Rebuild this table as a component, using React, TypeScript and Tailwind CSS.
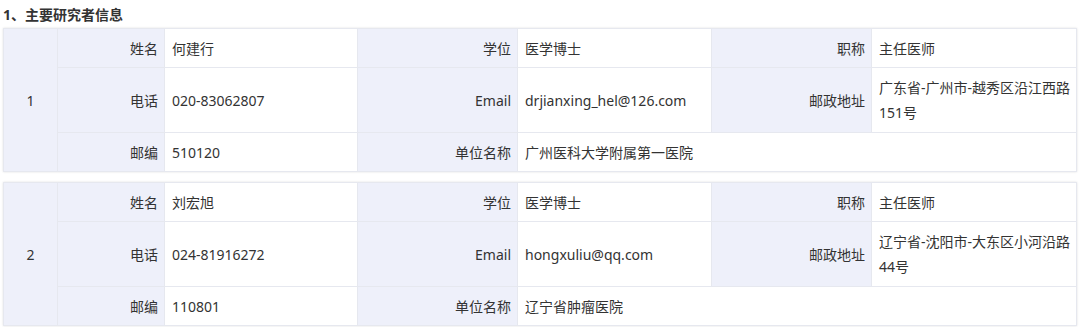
import React from "react";

type Person = {
  idx: string;
  name: string;
  degree: string;
  title: string;
  phone: string;
  email: string;
  address: string;
  zip: string;
  unit: string;
};

const people: Person[] = [
  {
    idx: "1",
    name: "何建行",
    degree: "医学博士",
    title: "主任医师",
    phone: "020-83062807",
    email: "drjianxing_hel@126.com",
    address: "广东省-广州市-越秀区沿江西路151号",
    zip: "510120",
    unit: "广州医科大学附属第一医院",
  },
  {
    idx: "2",
    name: "刘宏旭",
    degree: "医学博士",
    title: "主任医师",
    phone: "024-81916272",
    email: "hongxuliu@qq.com",
    address: "辽宁省-沈阳市-大东区小河沿路44号",
    zip: "110801",
    unit: "辽宁省肿瘤医院",
  },
];

const lab = "bg-[#eef0fa] text-right align-middle px-[6px] py-0 border border-[#e6e8ef]";
const val = "bg-white text-left align-middle pl-[7px] pr-[2px] py-0 border border-[#e6e8ef]";

function PersonTable({ p }: { p: Person }) {
  return (
    <table className="w-[1073px] table-fixed border-collapse shadow-[0_0_2px_rgba(0,0,0,0.12)]">
      <colgroup>
        <col className="w-[54px]" />
        <col className="w-[107px]" />
        <col className="w-[193px]" />
        <col className="w-[160px]" />
        <col className="w-[194px]" />
        <col className="w-[160px]" />
        <col className="w-[205px]" />
      </colgroup>
      <tbody>
        <tr className="h-[39px]">
          <td rowSpan={3} className="bg-[#eef0fa] text-center align-middle border border-[#e6e8ef]">
            {p.idx}
          </td>
          <td className={lab}>姓名</td>
          <td className={val}>{p.name}</td>
          <td className={lab}>学位</td>
          <td className={val}>{p.degree}</td>
          <td className={lab}>职称</td>
          <td className={val}>{p.title}</td>
        </tr>
        <tr className="h-[65px]">
          <td className={lab}>电话</td>
          <td className={val}>{p.phone}</td>
          <td className={lab}>Email</td>
          <td className={val}>{p.email}</td>
          <td className={lab}>邮政地址</td>
          <td className={val}>{p.address}</td>
        </tr>
        <tr className="h-[39px]">
          <td className={lab}>邮编</td>
          <td className={val}>{p.zip}</td>
          <td className={lab}>单位名称</td>
          <td colSpan={3} className={val}>
            {p.unit}
          </td>
        </tr>
      </tbody>
    </table>
  );
}

export default function App() {
  return (
    <div
      className="w-[1080px] h-[327px] bg-white px-[3px] text-[14px] leading-[25px] text-[#333333]"
      style={{ fontFamily: '"Noto Sans", "Noto Sans CJK SC", sans-serif' }}
    >
      <div className="h-[28px] flex items-center font-bold text-[14px]">1、主要研究者信息</div>
      <div className="flex flex-col gap-[10px]">
        {people.map((p) => (
          <PersonTable key={p.idx} p={p} />
        ))}
      </div>
    </div>
  );
}
